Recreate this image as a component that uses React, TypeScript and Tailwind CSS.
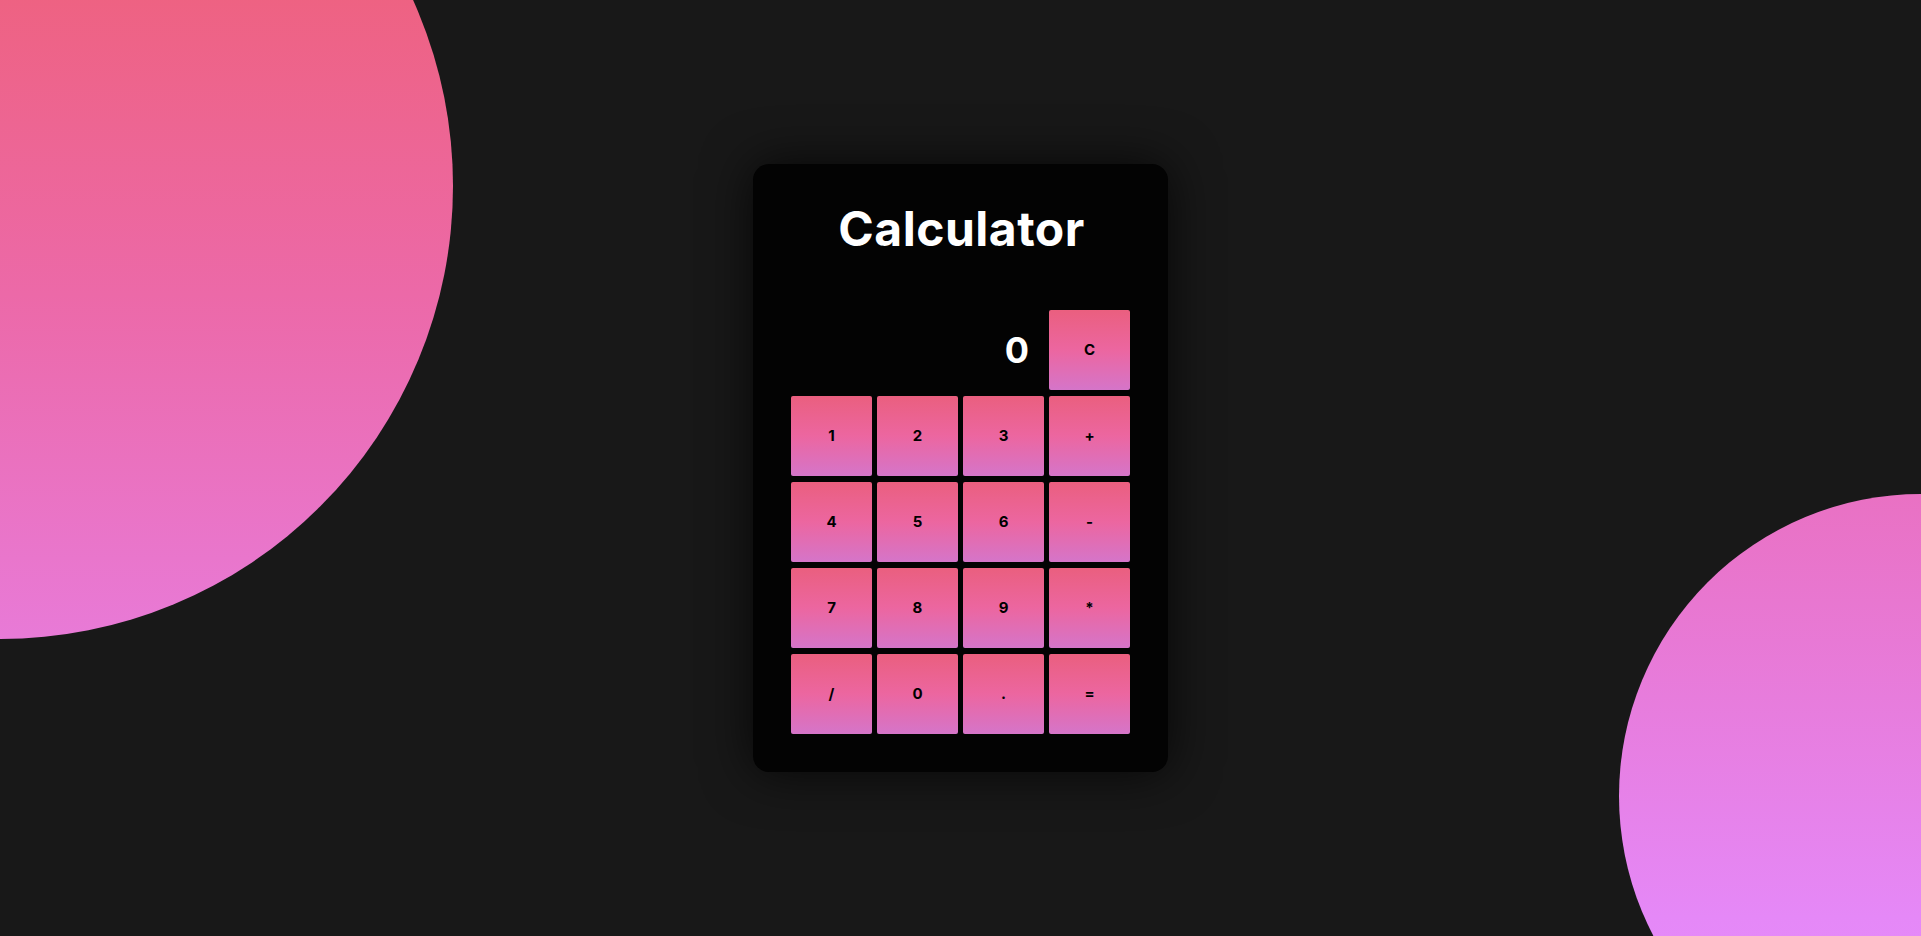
const keys = ["1", "2", "3", "+", "4", "5", "6", "-", "7", "8", "9", "*", "/", "0", ".", "="];

function Key({ label }: { label: string }) {
  return (
    <button className="w-[81px] h-[80px] rounded-[2px] bg-[linear-gradient(180deg,#ea5f7f_0%,#ec66a0_50%,#d575c9_100%)] text-black text-[15px] font-bold flex items-center justify-center">
      {label}
    </button>
  );
}

export default function App() {
  return (
    <div className="relative w-full h-screen overflow-hidden bg-[#181818] flex items-center justify-center font-['Inter','Noto_Sans',sans-serif]">
      {/* background blobs */}
      <div className="absolute left-[-453px] top-[-267px] w-[906px] h-[906px] rounded-full bg-[linear-gradient(180deg,#f05c72_0%,#ee6282_29%,#ec69a8_62%,#e87ad7_100%)]" />
      <div className="absolute right-[-302px] top-[494px] w-[604px] h-[604px] rounded-full bg-[linear-gradient(180deg,#e971c3_0%,#e588f7_70%,#e390ff_100%)]" />

      <div className="relative w-[415px] rounded-[16px] bg-[#030303] pl-[38px] pr-[36px] pt-[37px] pb-[38px] shadow-[0_0_50px_rgba(0,0,0,0.75)]">
        <h1 className="text-center text-white text-[48px] leading-[56px] font-bold tracking-[0.5px]">Calculator</h1>

        <div className="mt-[53px] grid grid-cols-[repeat(4,81px)] gap-x-[5px] gap-y-[6px]">
          <div className="col-span-3 flex items-center justify-end pr-[15px] text-white text-[36px] font-bold">0</div>
          <Key label="C" />
          {keys.map((k) => (
            <Key key={k} label={k} />
          ))}
        </div>
      </div>
    </div>
  );
}
